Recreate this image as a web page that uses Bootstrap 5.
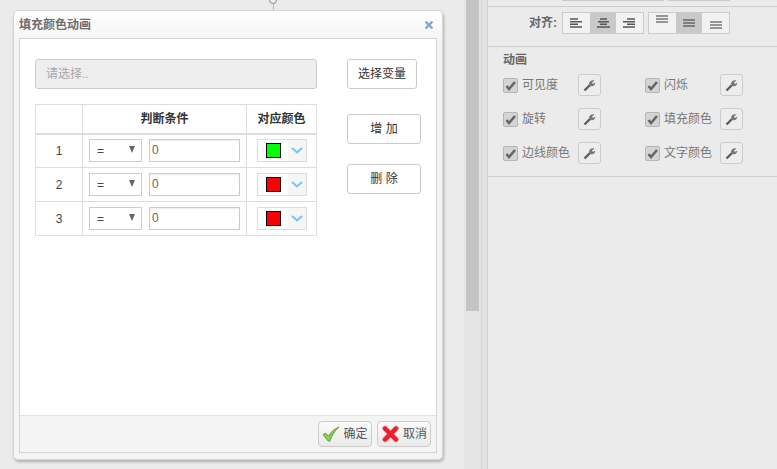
<!DOCTYPE html>
<html lang="zh"><head><meta charset="utf-8">
<link href="https://cdn.jsdelivr.net/npm/bootstrap@5.3.0/dist/css/bootstrap.min.css" rel="stylesheet">
<style>
html,body{height:469px;overflow:hidden}
body{background:#ebebeb;font-family:"Liberation Sans","Noto Sans CJK SC",sans-serif;font-size:12px;color:#333}
.stage{height:469px;display:flex}
.canvas-col{width:464px;position:relative;flex:none}
.anchor{position:absolute;left:269px;top:-4px;width:8px;height:8px;border:1px solid #888;border-radius:50%;background:#eee}
.anchor-line{position:absolute;left:273px;top:4px;width:1px;height:6px;background:#bbb}
.sbar{width:18px;flex:none;background:#e5e5e5;height:469px;padding:0 2px;border-right:1px solid #d0d0d0}
.sbar-thumb{width:13px;height:311px;background:#c4c4c4}
.gutter{width:5px;flex:none;background:#e3e3e3}
.side{width:290px;flex:none;border-left:1px solid #d2d2d2;height:469px}
.dlg{position:absolute;left:13px;top:10px;width:430px;height:450px;background:linear-gradient(#fff,#f4f4f4 30px);border:1px solid #d6d6d6;border-radius:5px;box-shadow:1px 2px 3px rgba(0,0,0,.25);display:flex;flex-direction:column;padding:0 5px 6px}
.dlg-head{height:27px;flex:none;display:flex;align-items:center;justify-content:space-between;font-size:12px;font-weight:700;color:#6d6d6d}
.close-x{margin-right:3px}
.dlg-body{flex:1;background:#fff;border:1px solid #d4d4d4;display:flex;flex-direction:column;min-height:0}
.dlg-main{flex:1;display:flex;padding:20px 15px 0 15px;min-height:0}
.left-col{width:282px;flex:none}
.right-col{margin-left:30px;display:flex;flex-direction:column;align-items:flex-start}
.varbox{height:30px;background:#eee;border:1px solid #ccc;border-radius:3px;padding:0 10px;line-height:28px;font-size:12px;color:#a8a8a8;margin-bottom:15px}
.btn-w{height:30px;font-size:12px;color:#333;background:#fff;border:1px solid #ccc;border-radius:3px;padding:0;display:flex;align-items:center;justify-content:center}
.btn-var{width:70px;margin-bottom:25px}
.btn-add{width:74px;margin-bottom:20px}
.cfg{width:282px;border-collapse:collapse;table-layout:fixed}
.cfg th,.cfg td{border:1px solid #ddd;text-align:center;padding:0;vertical-align:middle;color:#444}
.cfg th{height:29px;font-size:12px;font-weight:700;color:#333;border-bottom-width:2px}
.cfg td{height:34px}
.cond{display:flex;gap:7px;padding-left:6px}
.fake-sel{width:53px;height:23px;border:1px solid #ccc;background:#fff;display:flex;justify-content:space-between;align-items:center;padding:0 6px 0 7px;color:#444}
.tri{width:0;height:0;border-left:3.5px solid transparent;border-right:3.5px solid transparent;border-top:7px solid #666;margin-top:-3px}
.fake-inp{width:91px;height:23px;border:1px solid #ccc;background:#fff;box-shadow:inset 0 1px 2px rgba(0,0,0,.08);line-height:21px;text-align:left;padding-left:2px;color:#8a5a44}
.pick{width:50px;height:23px;margin:0 auto;border:1px solid #ddd;display:flex;background:#fff}
.pick-main{flex:1;display:flex;align-items:center;justify-content:center;padding-left:1px}
.swatch{width:15px;height:15px;border:1px solid #000}
.pick-arrow{width:18px;background:#f5f5f5;display:flex;align-items:center;justify-content:center}
.dlg-foot{height:37px;flex:none;background:#f4f4f4;border-top:1px solid #e2e2e2;display:flex;justify-content:flex-end;align-items:center;gap:5px;padding-right:5px}
.btn-foot{width:54px;height:26px;border:1px solid #ccc;border-radius:4px;background:linear-gradient(#fbfbfb,#eaeaea);display:flex;align-items:center;justify-content:center;gap:3px;padding:0;font-size:12px;color:#555}
.band{height:7px;border-bottom:1px solid #cfcfcf;display:flex;gap:4px;padding-left:74px}
.stub{height:1px;background:#f3f3f3;border-bottom:1px solid #ccc}
.stub-a{width:102px}
.stub-b{width:62px}
.align-row{height:40px;border-bottom:1px solid #cfcfcf;display:flex;align-items:flex-start;padding:5px 0 0 41px;font-size:12px;font-weight:700;color:#666}
.align-lbl{width:33px;line-height:22px}
.seg{display:flex;border:1px solid #ccc;background:#f2f2f2;height:22px;width:82px}
.seg>span{flex:1;display:flex;justify-content:center;align-items:center}
.seg>span.on{background:#c9c9c9}
.anim{height:130px;border-bottom:1px solid #cfcfcf;padding:6px 15px 0 15px}
.anim-title{font-size:12px;font-weight:700;color:#666;line-height:14px;margin-bottom:7px}
.anim-grid{display:grid;grid-template-columns:142px 1fr;row-gap:12px}
.anim-item{display:flex;align-items:center;height:22px;color:#777}
.chk{width:15px;height:15px;border:1px solid #b5b5b5;border-radius:2px;background:#d4d4d4;display:flex;align-items:center;justify-content:center;margin-right:4px;flex:none;margin-top:1px}
.anim-label{width:56px;flex:none}
.wrench{width:23px;height:22px;border:1px solid #ccc;border-radius:3px;background:#ededed;display:flex;align-items:center;justify-content:center;padding:0}
</style></head>
<body>
<div class="stage">
 <div class="canvas-col">
  <div class="anchor"></div><div class="anchor-line"></div>
  <div class="dlg">
   <div class="dlg-head"><span>填充颜色动画</span>
    <svg class="close-x" width="10" height="10" viewBox="0 0 10 10"><path d="M1.500 1.500l7 7M8.500 1.500l-7 7" stroke="#7da2d1" stroke-width="2.200" fill="none"/></svg></div>
   <div class="dlg-body">
    <div class="dlg-main">
     <div class="left-col">
      <div class="varbox">请选择..</div>
      <table class="cfg">
       <colgroup><col style="width:47px"><col style="width:164px"><col style="width:70px"></colgroup>
       <thead><tr><th></th><th>判断条件</th><th>对应颜色</th></tr></thead>
       <tbody>
        <tr><td>1</td><td><div class="cond"><div class="fake-sel"><span>=</span><i class="tri"></i></div><div class="fake-inp">0</div></div></td>
         <td><div class="pick"><div class="pick-main"><div class="swatch" style="background:#0f0"></div></div><div class="pick-arrow"><svg width="12" height="7" viewBox="0 0 12 7"><path d="M1 1l5 4.500L11 1" stroke="#7cc0f5" stroke-width="2" fill="none"/></svg></div></div></td></tr>
        <tr><td>2</td><td><div class="cond"><div class="fake-sel"><span>=</span><i class="tri"></i></div><div class="fake-inp">0</div></div></td>
         <td><div class="pick"><div class="pick-main"><div class="swatch" style="background:#f00"></div></div><div class="pick-arrow"><svg width="12" height="7" viewBox="0 0 12 7"><path d="M1 1l5 4.500L11 1" stroke="#7cc0f5" stroke-width="2" fill="none"/></svg></div></div></td></tr>
        <tr><td>3</td><td><div class="cond"><div class="fake-sel"><span>=</span><i class="tri"></i></div><div class="fake-inp">0</div></div></td>
         <td><div class="pick"><div class="pick-main"><div class="swatch" style="background:#f00"></div></div><div class="pick-arrow"><svg width="12" height="7" viewBox="0 0 12 7"><path d="M1 1l5 4.500L11 1" stroke="#7cc0f5" stroke-width="2" fill="none"/></svg></div></div></td></tr>
       </tbody>
      </table>
     </div>
     <div class="right-col">
      <button class="btn-w btn-var" type="button">选择变量</button>
      <button class="btn-w btn-add" type="button">增 加</button>
      <button class="btn-w btn-add" type="button">删 除</button>
     </div>
    </div>
    <div class="dlg-foot">
     <button class="btn-foot" type="button"><svg width="18" height="16" viewBox="0 0 18 16"><path d="M1 8.500l2.500-1.500 3 3C9 6 12.500 2.500 17 1c-4 3.500-7 8-9 14H6z" fill="#8cca5a" stroke="#4f9a2e" stroke-width=".8"/></svg>确定</button>
     <button class="btn-foot" type="button"><svg width="19" height="18" viewBox="0 0 19 18"><path d="M4 3.500l11 11M15 3.500l-11 11" stroke="#e6b8b8" stroke-width="6" stroke-linecap="round" fill="none"/><path d="M4 3.500l11 11M15 3.500l-11 11" stroke="#ee1c2c" stroke-width="4.400" stroke-linecap="round" fill="none"/></svg>取消</button>
    </div>
   </div>
  </div>
 </div>
 <div class="sbar"><div class="sbar-thumb"></div></div>
 <div class="gutter"></div>
 <div class="side">
  <div class="band"><div class="stub stub-a"></div><div class="stub stub-b"></div></div>
  <div class="align-row"><span class="align-lbl">对齐:</span>
   <div class="seg me-1">
    <span><svg width="13" height="10" viewBox="0 0 13 10"><path d="M0 1h8M0 3.700h12M0 6.300h8M0 9h12" stroke="#555" stroke-width="1.500"/></svg></span>
    <span class="on"><svg width="13" height="10" viewBox="0 0 13 10"><path d="M3 1h7M1 3.700h11M3 6.300h7M0 9h13" stroke="#555" stroke-width="1.500"/></svg></span>
    <span><svg width="13" height="10" viewBox="0 0 13 10"><path d="M4 1h8M0 3.700h12M4 6.300h8M0 9h12" stroke="#555" stroke-width="1.500"/></svg></span>
   </div>
   <div class="seg">
    <span class="pb-2"><svg width="12" height="8" viewBox="0 0 12 8"><path d="M0 1h12M0 4h12M0 7h12" stroke="#777" stroke-width="1.700"/></svg></span>
    <span class="on"><svg width="12" height="8" viewBox="0 0 12 8"><path d="M0 1h12M0 4h12M0 7h12" stroke="#666" stroke-width="1.700"/></svg></span>
    <span class="pt-1"><svg width="12" height="8" viewBox="0 0 12 8"><path d="M0 1h12M0 4h12M0 7h12" stroke="#777" stroke-width="1.700"/></svg></span>
   </div>
  </div>
  <div class="anim">
   <div class="anim-title">动画</div>
   <div class="anim-grid">
    <div class="anim-item"><span class="chk"><svg width="11" height="10" viewBox="0 0 11 10"><path d="M1.500 5l2.500 3 6-7" stroke="#666" stroke-width="2.600" fill="none"/></svg></span><span class="anim-label">可见度</span><button class="wrench" type="button"><svg width="13" height="13" viewBox="0 0 13 13"><path d="M1.500 11.500L7 6" stroke="#6a5a50" stroke-width="2.400"/><path d="M6 5c0-3 3-4.500 5.500-3.500L9 3.500 10 5l2.200-1.500C12.500 6 10 8 7.500 7z" fill="#777"/></svg></button></div>
    <div class="anim-item"><span class="chk"><svg width="11" height="10" viewBox="0 0 11 10"><path d="M1.500 5l2.500 3 6-7" stroke="#666" stroke-width="2.600" fill="none"/></svg></span><span class="anim-label">闪烁</span><button class="wrench" type="button"><svg width="13" height="13" viewBox="0 0 13 13"><path d="M1.500 11.500L7 6" stroke="#6a5a50" stroke-width="2.400"/><path d="M6 5c0-3 3-4.500 5.500-3.500L9 3.500 10 5l2.200-1.500C12.500 6 10 8 7.500 7z" fill="#777"/></svg></button></div>
    <div class="anim-item"><span class="chk"><svg width="11" height="10" viewBox="0 0 11 10"><path d="M1.500 5l2.500 3 6-7" stroke="#666" stroke-width="2.600" fill="none"/></svg></span><span class="anim-label">旋转</span><button class="wrench" type="button"><svg width="13" height="13" viewBox="0 0 13 13"><path d="M1.500 11.500L7 6" stroke="#6a5a50" stroke-width="2.400"/><path d="M6 5c0-3 3-4.500 5.500-3.500L9 3.500 10 5l2.200-1.500C12.500 6 10 8 7.500 7z" fill="#777"/></svg></button></div>
    <div class="anim-item"><span class="chk"><svg width="11" height="10" viewBox="0 0 11 10"><path d="M1.500 5l2.500 3 6-7" stroke="#666" stroke-width="2.600" fill="none"/></svg></span><span class="anim-label">填充颜色</span><button class="wrench" type="button"><svg width="13" height="13" viewBox="0 0 13 13"><path d="M1.500 11.500L7 6" stroke="#6a5a50" stroke-width="2.400"/><path d="M6 5c0-3 3-4.500 5.500-3.500L9 3.500 10 5l2.200-1.500C12.500 6 10 8 7.500 7z" fill="#777"/></svg></button></div>
    <div class="anim-item"><span class="chk"><svg width="11" height="10" viewBox="0 0 11 10"><path d="M1.500 5l2.500 3 6-7" stroke="#666" stroke-width="2.600" fill="none"/></svg></span><span class="anim-label">边线颜色</span><button class="wrench" type="button"><svg width="13" height="13" viewBox="0 0 13 13"><path d="M1.500 11.500L7 6" stroke="#6a5a50" stroke-width="2.400"/><path d="M6 5c0-3 3-4.500 5.500-3.500L9 3.500 10 5l2.200-1.500C12.500 6 10 8 7.500 7z" fill="#777"/></svg></button></div>
    <div class="anim-item"><span class="chk"><svg width="11" height="10" viewBox="0 0 11 10"><path d="M1.500 5l2.500 3 6-7" stroke="#666" stroke-width="2.600" fill="none"/></svg></span><span class="anim-label">文字颜色</span><button class="wrench" type="button"><svg width="13" height="13" viewBox="0 0 13 13"><path d="M1.500 11.500L7 6" stroke="#6a5a50" stroke-width="2.400"/><path d="M6 5c0-3 3-4.500 5.500-3.500L9 3.500 10 5l2.200-1.500C12.500 6 10 8 7.500 7z" fill="#777"/></svg></button></div>
   </div>
  </div>
 </div>
</div>
<script src="https://cdn.jsdelivr.net/npm/bootstrap@5.3.0/dist/js/bootstrap.bundle.min.js"></script>
</body></html>
